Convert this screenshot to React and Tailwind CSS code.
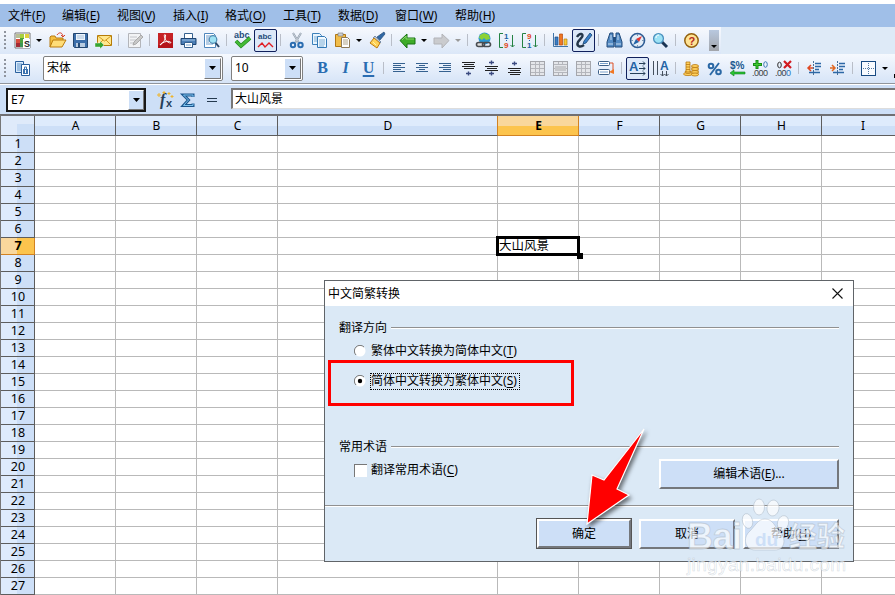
import clsx from 'clsx';

const COLUMNS = [
	{ name: 'A', width: 'w-[81px]' },
	{ name: 'B', width: 'w-[81px]' },
	{ name: 'C', width: 'w-[81px]' },
	{ name: 'D', width: 'w-[220px]' },
	{ name: 'E', width: 'w-[81px]' },
	{ name: 'F', width: 'w-[81px]' },
	{ name: 'G', width: 'w-[81px]' },
	{ name: 'H', width: 'w-[81px]' },
	{ name: 'I', width: 'w-[82px]' },
];
const ROWS = Array.from({ length: 27 }, (_, i) => i + 1);

const MENU = [
	['文件', 'F', 'w-[54px]'],
	['编辑', 'E', 'w-[55px]'],
	['视图', 'V', 'w-[56px]'],
	['插入', 'I', 'w-[52px]'],
	['格式', 'O', 'w-[58px]'],
	['工具', 'T', 'w-[55px]'],
	['数据', 'D', 'w-[57px]'],
	['窗口', 'W', 'w-[60px]'],
	['帮助', 'H', 'w-[60px]'],
];

function Label({ text, hotkey, after = '' }) {
	return (
		<span className="whitespace-nowrap">
			{text}(<span className="underline underline-offset-2 decoration-1">{hotkey}</span>){after}
		</span>
	);
}

/* toolbar pieces */

function Tool({ boxed, children }) {
	return (
		<div className={clsx('w-[23px] h-[23px] shrink-0 flex items-center justify-center', boxed && 'border border-[#10205c] rounded-[2px] bg-[#dce8f8]')}>
			<svg width="17" height="17" viewBox="0 0 17 17" fill="none" className="shrink-0 overflow-visible">{children}</svg>
		</div>
	);
}

function Sep() {
	return <div className="w-2 h-3 shrink-0 pl-[3px]"><div className="w-px h-3 bg-[#b9bec8]" /></div>;
}

function Caret({ muted }) {
	return (
		<svg width="11" height="5" viewBox="0 0 11 5" className="shrink-0">
			<path d="M2 1h6L5 4z" fill={muted ? '#999' : '#000'} />
		</svg>
	);
}

function Grip() {
	return (
		<div className="w-[11px] shrink-0 pl-1 flex flex-col gap-[2px]">
			{[1, 2, 3, 4, 5].map((n) => <div key={n} className="w-[2px] h-[2px] bg-[#8f949e]" />)}
		</div>
	);
}

function DropButton({ className }) {
	return (
		<div className={clsx('shrink-0 flex items-center justify-center bg-[#cddff7] border border-t-white border-l-white border-r-[#777] border-b-[#777]', className)}>
			<svg width="7" height="4" viewBox="0 0 7 4"><path d="M0 0h7L3.5 4z" fill="#000" /></svg>
		</div>
	);
}

function Combo({ value, className }) {
	return (
		<div className={clsx('h-[25px] shrink-0 flex items-center bg-white border border-[#808080] rounded-[2px] pl-[3px] pr-px', className)}>
			<span className="flex-1">{value}</span>
			<DropButton className="w-[17px] h-[21px]" />
		</div>
	);
}

function Lines({ rows, color = '#35618f' }) {
	return rows.map(([x, y, w]) => <path key={y} d={`M${x} ${y + 0.5}h${w}`} stroke={color} />);
}

function Digits({ x, y, fill, size = 8, children }) {
	return <text x={x} y={y} fill={fill} fontSize={size} fontWeight="bold" className="font-['Liberation_Sans',sans-serif]">{children}</text>;
}

function Decimals({ children }) {
	return <text x="0" y="16" fontSize="9" textLength="16" fill="#3a3f45" className="font-['Liberation_Sans',sans-serif]">{children}</text>;
}

function TableIcon({ variant }) {
	return (
		<Tool>
			<rect x="1.5" y="1.5" width="14" height="14" fill="#e4e6ea" stroke="#a4a6ac" />
			{variant !== 'merge' && <path d="M6.5 2v13M10.5 2v13" stroke="#b4b6bc" />}
			<path d="M2 4.5h13M2 8.5h13M2 12.5h13" stroke="#b4b6bc" />
			{variant === 'merge' && <><path d="M6.5 2v2M10.5 2v2M6.5 12v3M10.5 12v3" stroke="#b4b6bc" /><path d="M3 6h11v5H3z" fill="#c6c8cc" /></>}
		</Tool>
	);
}

function StandardBar() {
	return (
		<div className="h-[27px] flex bg-[#deeaf7]">
			<div className="w-[721px] pb-px flex items-center bg-gradient-to-b from-[#f7f9fd] to-[#dbe7f8]">
				<Grip />
				<Tool>
					<path d="M1 1h15v15H1z" fill="#fff" stroke="#777" />
					<path d="M2 2h4v4H2z" fill="#b8bf95" /><path d="M6 2h4v4H6z" fill="#a7cf3d" /><path d="M11 2h4v4h-4z" fill="#e0d13c" />
					<path d="M2 7h4v4H2z" fill="#d94c3d" /><path d="M6 6h4v5H6z" fill="#4ba440" /><path d="M2 11h4v4H2z" fill="#a22a35" /><path d="M6 11h3v4H6z" fill="#3d9555" />
					<path d="M9 7h7v9H9z" fill="#fff" />
					<Digits x="10" y="15" fill="#222" size="9">S</Digits>
				</Tool>
				<Caret /><div className="w-px" />
				<Tool>
					<path d="M1 15V5l1-1h4l1 2h7v3" fill="#f4bf3e" stroke="#b67a13" />
					<path d="M1 15l3-7h13l-4 7z" fill="#ffdd78" stroke="#bb7b0c" />
					<path d="M8 3c2-3 5-3 6 1M12 3l2 2 2-2" stroke="#d9412b" />
				</Tool>
				<Tool>
					<path d="M1.500 1.500h14v14h-13l-1-1z" fill="#3c6eaa" stroke="#24466f" />
					<path d="M4 2h9v6H4z" fill="#edf4fb" /><path d="M5 4h7M5 6h7" stroke="#a7bfd8" />
					<path d="M4 11h9v4H4z" fill="#b8cbe0" /><path d="M6 11h2v4H6z" fill="#254b77" />
				</Tool>
				<Tool>
					<path d="M2.500 3.500h14v10h-14z" fill="#ffe78e" stroke="#b57c09" />
					<path d="M3 4l6.500 5L16 4M3 13l5-5M16 13l-5-5" stroke="#d39b20" />
					<path d="M0 11h5V9l4 4-4 4v-2H0z" fill="#37a532" stroke="#fff" strokeWidth=".4" />
				</Tool>
				<Sep />
				<Tool>
					<path d="M2.500 1.500h12v14h-12z" fill="#f2f3f5" stroke="#b3b5ba" />
					<path d="M4 5h7M4 8h6M4 11h4" stroke="#c2c4c9" /><path d="M7 13l1-3 7-7 2 2-7 7z" fill="#c8c8c8" stroke="#aaa" />
				</Tool>
				<Sep />
				<Tool>
					<path d="M1 1h15v15H1z" fill="#b5141a" /><path d="M1 1h15v6L1 13z" fill="#d83030" opacity=".5" />
					<path d="M3 13c4-2 6-7 5.500-10-1-1-1.500 0-1 2 1 4 4 6 6 6 1-1-1-2-4-1.500-3 .5-6 2-6.500 3.500" stroke="#fff" strokeWidth="1" />
				</Tool>
				<Tool>
					<path d="M4.500 1.500h8v5h-8z" fill="#fff" stroke="#35618f" />
					<path d="M1 6.500h15v6H1z" fill="#4b7eb6" stroke="#1f4572" /><path d="M2 8h13" stroke="#9fc1e4" />
					<path d="M4.500 10.500h8v5h-8z" fill="#fff" stroke="#35618f" /><path d="M6 13h5" stroke="#7ba5d0" />
				</Tool>
				<Tool>
					<path d="M1.500 1.500h9l2 2v12h-11z" fill="#fff" stroke="#4f86bd" />
					<path d="M3 4h5M3 6h3M3 8h3M3 10h3M3 12h7" stroke="#6d9bcb" />
					<path d="M12 10l4 5" stroke="#2b4766" strokeWidth="2" /><circle cx="10" cy="7.500" r="3.800" fill="#9fe2f4" stroke="#4b86ae" strokeWidth="1.200" />
				</Tool>
				<Sep />
				<Tool>
					<Digits x="0" y="6" fill="#1f4d7b" size="9">abc</Digits>
					<path d="M2 9l5 5 9-8" stroke="#23881f" strokeWidth="3.800" /><path d="M2 9l5 5 9-8" stroke="#44bb36" strokeWidth="2.400" />
				</Tool>
				<Tool boxed>
					<Digits x="1" y="7" fill="#1f4d7b" size="8">abc</Digits>
					<path d="M1 15l4-4 3 4 4-4 4 4" stroke="#e01d24" strokeWidth="1.400" />
				</Tool>
				<Sep />
				<Tool>
					<path d="M5 1l6 10M13 1L7 11" stroke="#8d9aa8" strokeWidth="2" /><path d="M5 1l6 10M13 1L7 11" stroke="#dce3ea" strokeWidth=".7" />
					<circle cx="5" cy="13" r="2.200" stroke="#2b6db1" strokeWidth="2" /><circle cx="12.500" cy="13" r="2.200" stroke="#2b6db1" strokeWidth="2" />
				</Tool>
				<Tool>
					<path d="M1.500 1.500h7l2 2v9h-9z" fill="#e8f4fd" stroke="#3c80ba" /><path d="M3 5h5M3 7h5M3 9h4" stroke="#7eaed5" />
					<path d="M6.500 4.500h7l2 2v9h-9z" fill="#f1f9ff" stroke="#3278b5" /><path d="M8 8h6M8 10h6M8 12h6M8 14h5" stroke="#7eaed5" />
				</Tool>
				<Tool>
					<path d="M1.500 2.500h10v12h-10z" fill="#f1bd4a" stroke="#b17714" /><path d="M4 1h5v3H4z" fill="#ccd0d5" stroke="#777" strokeWidth=".6" />
					<path d="M7.500 5.500h6l2 2v8h-8z" fill="#fff" stroke="#8b795a" /><path d="M9 8h5M9 10h5M9 12h5" stroke="#afa388" />
				</Tool>
				<Caret />
				<Tool>
					<path d="M16 0l1 2-5 6-3-3z" fill="#3068a5" stroke="#234c79" strokeWidth=".7" />
					<path d="M7 4l6 6-2 2-6-6z" fill="#b5c7dc" stroke="#566c89" strokeWidth=".7" />
					<path d="M6 6l6 5-3 5-7-5z" fill="#ffd257" stroke="#bd7b10" /><path d="M5 10l3 3" stroke="#fff1a7" />
				</Tool>
				<Sep />
				<Tool><path d="M1 8.500L8 2v4h8v6H8v4z" fill="#3eac28" stroke="#187312" /><path d="M3 8l4-4v3h8" stroke="#89d46b" /></Tool>
				<Caret />
				<Tool><path d="M16 8.500L9 2v4H1v6h8v4z" fill="#cacbce" stroke="#b2b3b7" /></Tool>
				<Caret muted />
				<Sep />
				<Tool>
					<circle cx="9.500" cy="6.500" r="6" fill="#2c97d4" /><path d="M5 3l4-2 5 2 1 4-4 1-2-2-2 2-3-2z" fill="#8cd236" />
					<rect x="1.500" y="10.500" width="8" height="4" rx="2" fill="#ddd" stroke="#494d52" strokeWidth="1.600" /><rect x="7.500" y="10.500" width="8" height="4" rx="2" stroke="#494d52" strokeWidth="1.600" />
				</Tool>
				<Tool>
					<path d="M5 1.500H1.500v14H5" stroke="#248242" /><Digits x="6" y="7" fill="#2160a5">1</Digits><Digits x="6" y="16" fill="#e24822">9</Digits>
					<path d="M8.500 8v2" stroke="#2160a5" strokeDasharray="1" /><path d="M14.500 3v12m-2-2l2 2 2-2" stroke="#248242" />
				</Tool>
				<Tool>
					<path d="M5 1.500H1.500v14H5" stroke="#248242" /><Digits x="6" y="7" fill="#e24822">9</Digits><Digits x="6" y="16" fill="#2160a5">1</Digits>
					<path d="M8.500 8v2" stroke="#2160a5" strokeDasharray="1" /><path d="M14.500 3v12m-2-2l2 2 2-2" stroke="#248242" />
				</Tool>
				<Sep />
				<Tool>
					<path d="M1.500 1v13.500H16" stroke="#4175a8" /><path d="M3 5h3v8H3z" fill="#3d80c7" stroke="#214c80" strokeWidth=".7" />
					<path d="M7.500 2h3v11h-3z" fill="#ef7622" stroke="#b84a0c" strokeWidth=".7" /><path d="M12 7h3v6h-3z" fill="#f8cb35" stroke="#b98218" strokeWidth=".7" />
				</Tool>
				<Tool boxed>
					<path d="M2 5c3-5 7-3 5 0L3 10c-2 4 2 6 6 3" stroke="#253749" strokeWidth="2.400" />
					<path d="M9 9l6-8 2 2-6 8-3 1z" fill="#377fc8" stroke="#174473" strokeWidth=".8" />
				</Tool>
				<Sep />
				<Tool>
					<path d="M4 1h3v4l1 2v8H1v-5zM10 1h3l3 9v5H9V7l1-2z" fill="#548bc4" stroke="#244d7c" /><path d="M7 5h3v5H7z" fill="#244d7c" />
					<path d="M2 12h5M10 12h5M5 3v5M12 3v5" stroke="#c8ddf1" />
				</Tool>
				<Tool>
					<circle cx="8.500" cy="8.500" r="7" fill="#e3edf7" stroke="#2d5c94" strokeWidth="1.600" /><path d="M8.500 2v2M8.500 13v2M2 8.500h2M13 8.500h2" stroke="#7895b5" />
					<path d="M13 4l-3 6-3-3z" fill="#e43632" /><path d="M4 13l3-6 3 3z" fill="#2464a7" />
				</Tool>
				<Tool><path d="M10 10l5 5" stroke="#1b3554" strokeWidth="3" /><circle cx="6.500" cy="6.500" r="4.900" fill="#9de2f5" stroke="#4a90bd" strokeWidth="1.300" /><path d="M4 6c0-2 1-3 3-3" stroke="#fff" /></Tool>
				<Sep />
				<Tool><circle cx="8.500" cy="8.500" r="6.700" fill="#ffe395" stroke="#94610f" strokeWidth="1.500" /><Digits x="5.500" y="12.500" fill="#b52a22" size="11">?</Digits></Tool>
				<div className="ml-[6px] w-[10px] h-[21px] shrink-0 bg-gradient-to-b from-[#b8c8df] to-[#a2a5aa] flex items-end pb-[2px]"><Caret /></div>
			</div>
		</div>
	);
}

const VALIGN = {
	top: { lines: [2, 4, 6, 8], marks: [13] },
	middle: { lines: [6, 8, 10], marks: [2, 13] },
	bottom: { lines: [8, 10, 12, 14], marks: [3] },
};

function AlignV({ pos }) {
	const { lines, marks } = VALIGN[pos];
	return (
		<Tool>
			<Lines color="#222" rows={lines.map((y, i) => [i % 2 ? 4 : 2, y, i % 2 ? 10 : 13])} />
			{marks.map((y) => <path key={y} d={`M8.500 ${y - 1.5}v4M6 ${y + 0.5}h5`} stroke="#3b4a80" strokeWidth="1.400" />)}
		</Tool>
	);
}

function FormatBar() {
	return (
		<div className="h-[30px] pb-[1px] flex items-center bg-gradient-to-b from-[#f6f9fe] to-[#d6e4f7] border-b border-[#90959c]">
			<Grip />
			<Tool>
				<path d="M1.500 1.500h8v11h-8z" fill="#d9ebfb" stroke="#2b609d" /><path d="M3 4h5M3 6h4M3 8h4M3 10h4" stroke="#5e92c7" />
				<path d="M7.500 4.500h8v11h-8z" fill="#fff" stroke="#2b609d" /><path d="M9 14V9h5v5z" fill="#3d74b0" /><path d="M10.500 9V7h2v2" stroke="#3d74b0" /><path d="M11.500 10v3" stroke="#fff" />
			</Tool>
			<Combo value="宋体" className="w-[180px] ml-[9px]" />
			<Combo value="10" className="w-[72px] ml-2" />
			<div className="w-2 shrink-0" />
			{['B', 'I', 'U'].map((c) => (
				<div key={c} className={clsx("w-[23px] shrink-0 text-center text-[16px] leading-[20px] font-bold font-['Liberation_Serif',serif] text-[#2a6db2]", c === 'I' && 'italic', c === 'U' && 'underline underline-offset-2 decoration-2')}>{c}</div>
			))}
			<Sep />
			<Tool><Lines rows={[[2, 3, 12], [2, 5, 8], [2, 7, 12], [2, 9, 8], [2, 11, 12]]} /></Tool>
			<Tool><Lines rows={[[2, 3, 12], [5, 5, 6], [2, 7, 12], [5, 9, 6], [2, 11, 12]]} /></Tool>
			<Tool><Lines rows={[[2, 3, 12], [6, 5, 8], [2, 7, 12], [6, 9, 8], [2, 11, 12]]} /></Tool>
			<AlignV pos="top" />
			<AlignV pos="middle" />
			<AlignV pos="bottom" />
			<TableIcon />
			<TableIcon variant="merge" />
			<TableIcon />
			<Tool>
				<rect x=".5" y="1.500" width="11" height="4" rx="1" fill="#fff" stroke="#3c5f87" /><rect x=".5" y="9.500" width="11" height="5" rx="1" fill="#fff" stroke="#3c5f87" />
				<path d="M2 3.500h8M2 12h8" stroke="#78a0cc" /><path d="M12 3h3v9" stroke="#dc5126" /><path d="M11 12l5-3v5z" fill="#f07723" />
			</Tool>
			<Sep />
			<Tool boxed><Digits x="0" y="11" fill="#2363a5" size="13">A</Digits><path d="M10 3.500h6m-2-2l2 2-2 2M10 8.500h6m-2-2l2 2-2 2M1 13.500h15m-2-2l2 2-2 2" stroke="#263f58" /></Tool>
			<Tool><path d="M1.500 1v14M5.500 1v14M10.500 11v5M14.500 11v5m-6-2l2 2 2-2 2 2 2-2" stroke="#45505d" /><Digits x="8" y="10" fill="#2363a5" size="12">A</Digits></Tool>
			<Sep />
			<Tool>
				<g fill="#ffd05d" stroke="#b87812" strokeWidth=".8">
					<ellipse cx="5" cy="14" rx="4.500" ry="1.600" /><ellipse cx="5" cy="12" rx="3" ry="1.500" /><path d="M3 2h4v10H3zM3 4.500h4M3 7h4M3 9.500h4" />
					<path d="M9 6h6v9H9z" /><ellipse cx="12" cy="6" rx="3.500" ry="1.500" /><ellipse cx="12" cy="9" rx="3.500" ry="1.500" /><ellipse cx="12" cy="12" rx="3.500" ry="1.500" /><ellipse cx="12" cy="14.500" rx="3.500" ry="1.500" />
				</g>
			</Tool>
			<Tool><circle cx="5" cy="6" r="2.300" stroke="#2a68a5" strokeWidth="2" /><circle cx="12.500" cy="12" r="2.300" stroke="#2a68a5" strokeWidth="2" /><path d="M13 3L4 15" stroke="#2a68a5" strokeWidth="1.800" /></Tool>
			<Tool><Digits x="1" y="9" fill="#205990" size="10">$%</Digits><path d="M1 13l4-3v2h11v2H5v2z" fill="#2ac432" stroke="#128222" strokeWidth=".6" /></Tool>
			<Tool>
				<Decimals>.000</Decimals>
				<path d="M5 0v9M1 4.500h9" stroke="#179017" strokeWidth="3" /><path d="M5 1v7M2 4.500h7" stroke="#42cb30" />
				<ellipse cx="13.500" cy="4.500" rx="1.800" ry="2.800" stroke="#3a78b5" />
			</Tool>
			<Tool>
				<Decimals>.00<tspan fill="#2672b9">0</tspan></Decimals>
				<ellipse cx="4.500" cy="5" rx="1.800" ry="2.800" stroke="#333" /><path d="M9 1l7 7M16 1L9 8" stroke="#d21a20" strokeWidth="2.200" />
			</Tool>
			<Sep />
			<Tool><path d="M7.500 1v14" stroke="#497097" strokeDasharray="2 1" /><path d="M9 3.500h6M9 6.500h6M9 9.500h4M3 12.500h11" stroke="#2d68a6" strokeWidth="1.500" /><path d="M7 8H2m3-3L2 8l3 3" stroke="#df4923" strokeWidth="1.500" /></Tool>
			<Tool><path d="M8.500 1v14" stroke="#497097" strokeDasharray="2 1" /><path d="M10 3.500h6M10 6.500h6M10 9.500h4M4 12.500h11" stroke="#2d68a6" strokeWidth="1.500" /><path d="M1 8h5M3 5l3 3-3 3" stroke="#e16924" strokeWidth="1.500" /></Tool>
			<Sep />
			<Tool><rect x="1.500" y="1.500" width="14" height="14" fill="#f8fbff" stroke="#174a82" /><path d="M8.500 3v11M3 8.500h11" stroke="#5279a4" strokeDasharray="1 1" /></Tool>
			<Caret />
			<div className="ml-[3px] mt-[15px] w-1 h-1 shrink-0 bg-black" />
		</div>
	);
}

function FormulaBar() {
	return (
		<div className="h-[30px] pt-[3px] pl-[6px] flex items-start bg-[#cddff7] border-t border-white">
			<div className="w-[140px] h-6 shrink-0 flex items-center bg-white border-2 border-[#181818] pl-[3px]">
				<span className="flex-1">E7</span>
				<DropButton className="w-[16px] h-5" />
			</div>
			<div className="w-[85px] h-6 shrink-0 flex items-center pl-[8px]">
				<Tool>
					<text x="3" y="13" fontSize="16" fontStyle="italic" fontWeight="bold" fill="#253e5a" className="font-['Liberation_Serif',serif]">f</text>
					<Digits x="9" y="15" fill="#253e5a" size="11">x</Digits>
					<path d="M2 1v4M0 3h4M7-1v3M5.500 .5h3M12 0v3M10.500 1.500h3M15 3v3M13.500 4.500h3" stroke="#efb42b" />
				</Tool>
				<Tool><path d="M13 5V3H3.500l5 5-5 5.500H13v-2" stroke="#1d578e" strokeWidth="3" /><path d="M13 5V3H3.500l5 5-5 5.500H13v-2" stroke="#7cc3ef" /></Tool>
				<Tool><path d="M4 6.500h10M4 9.500h10" stroke="#24394e" strokeWidth="1.200" /></Tool>
			</div>
			<div className="flex-1 h-[21px] flex items-center bg-white border-t-2 border-l-2 border-[#777] border-b border-b-[#ddd] pl-[2px]">大山风景</div>
		</div>
	);
}

function Sheet() {
	return (
		<div className="bg-white border-l-2 border-[#777] border-t-2 border-t-[#6f6f73]">
			<div className="flex h-5 -mx-px">
				<div className="w-[34px] shrink-0 border-r border-b border-[#5d5d5d] bg-[#dfeafa] pl-4 pt-2"><div className="h-full bg-[#cddff7]" /></div>
				{COLUMNS.map((c) => (
					<div
						key={c.name}
						className={clsx(
							'shrink-0 flex items-center justify-center border-r border-b pl-px',
							c.width,
							c.name === 'E'
								? 'font-bold border-[#d28221] bg-[linear-gradient(#f9d79c_50%,#fcc44d_50%)]'
								: 'border-[#5d5d5d] bg-[linear-gradient(#deebfc_50%,#cddff7_50%)]',
							c.name === 'D' && 'border-r-[#d28221]',
						)}
					>
						{c.name}
					</div>
				))}
			</div>
			{ROWS.map((n) => (
				<div key={n} className="flex h-[17px] -mx-px">
					<div
						className={clsx(
							'w-[34px] shrink-0 flex items-center justify-center border-r border-b pl-px text-[12.5px]',
							n === 7
								? 'font-bold border-[#d28221] bg-[linear-gradient(90deg,#f9d79c_50%,#fcc44d_50%)]'
								: 'border-[#5d5d5d] bg-[linear-gradient(90deg,#deebfc_50%,#cddff7_50%)]',
						)}
					>
						{n}
					</div>
					{COLUMNS.map((c) => (
						<div key={c.name} className={clsx('relative shrink-0 border-r border-b border-[#b9b9b9]', c.width)}>
							{n === 7 && c.name === 'E' && (
								<div className="absolute -left-[2px] -top-[2px] w-[84px] h-[20px] border-3 border-black bg-white flex items-center text-[12.5px] z-10">
									大山风景
									<div className="absolute -right-[6px] -bottom-[6px] w-[6px] h-[6px] bg-black" />
								</div>
							)}
						</div>
					))}
				</div>
			))}
		</div>
	);
}

/* dialog */

function GroupTitle({ children }) {
	return (
		<div className="h-4 flex items-center gap-[4px]">
			<span>{children}</span>
			<div className="flex-1 h-[2px] bg-white border-t border-[#909090]" />
		</div>
	);
}

function Radio({ checked }) {
	return (
		<svg width="12" height="12" viewBox="0 0 12 12" className="shrink-0">
			<circle cx="6" cy="6" r="5.500" fill="#fff" />
			<path d="M2 10A5.500 5.500 0 0 1 10 2" fill="none" stroke="#777" />
			{checked && <circle cx="6" cy="6" r="2.200" fill="#000" />}
		</svg>
	);
}

function Button({ primary, className, children }) {
	return (
		<div className={clsx('shrink-0', className, primary && 'border border-[#555]')}>
			<div className="h-full flex items-center justify-center bg-[#cddff7] border-2 border-t-white border-l-white border-r-[#74777c] border-b-[#74777c]">{children}</div>
		</div>
	);
}

function Dialog() {
	return (
		<div className="absolute left-[324px] top-[280px] w-[530px] h-[282px] border border-[#606468] bg-[#dbe9f6] z-20">
			<div className="h-[25px] flex items-center justify-between bg-white pl-[3px] pr-[10px]">
				<span>中文简繁转换</span>
				<svg width="11" height="11" viewBox="0 0 11 11"><path d="M.5.5l10 10M10.500.5l-10 10" stroke="#111" strokeWidth="1.100" /></svg>
			</div>
			<div className="px-[14px] pt-[14px]">
				<GroupTitle>翻译方向</GroupTitle>
				<div className="h-4 mt-[7px] pl-[15px] flex items-center gap-[5px]">
					<Radio />
					<Label text="繁体中文转换为简体中文" hotkey="T" />
				</div>
				<div className="h-4 mt-[14px] pl-[15px] flex items-center gap-1">
					<Radio checked />
					<div className="h-[17px] w-[150px] border border-dotted border-black flex items-center"><Label text="简体中文转换为繁体中文" hotkey="S" /></div>
				</div>
				<div className="mt-[50px]"><GroupTitle>常用术语</GroupTitle></div>
				<div className="mt-[4px] pl-[15px] flex justify-between">
					<div className="h-4 mt-[3px] flex items-center gap-1">
						<div className="w-[13px] h-[13px] bg-white border-t border-l border-[#777]" />
						<Label text="翻译常用术语" hotkey="C" />
					</div>
					<Button className="w-[180px] h-[30px]"><Label text="编辑术语" hotkey="E" after="..." /></Button>
				</div>
			</div>
			<div className="mt-4 h-[2px] bg-white border-t border-[#909090]" />
			<div className="mt-[11px] pr-[14px] flex justify-end items-end">
				<Button primary className="w-[96px] h-[31px]">确定</Button>
				<Button className="w-[96px] h-[30px] ml-[7px]">取消</Button>
				<Button className="w-[96px] h-[30px] ml-2"><Label text="帮助" hotkey="H" /></Button>
			</div>
		</div>
	);
}

function Watermark() {
	return (
		<svg width="170" height="84" viewBox="0 0 170 84" className="absolute left-[682px] top-[496px] z-30">
			<g fill="#fff" fillOpacity=".68" stroke="#a9b6c4" strokeOpacity=".55" strokeWidth=".9" className="font-['Liberation_Sans','Noto_Sans_CJK_SC',sans-serif]">
				<text x="5" y="53" fontSize="36" fontWeight="bold" textLength="55">Bai</text>
				<ellipse cx="65.500" cy="25" rx="5" ry="7.500" transform="rotate(-15 65.500 25)" />
				<ellipse cx="77" cy="11" rx="5.500" ry="8" />
				<ellipse cx="91" cy="12" rx="6" ry="8" transform="rotate(8 91 12)" />
				<ellipse cx="101" cy="27" rx="5.500" ry="7.500" transform="rotate(15 101 27)" />
				<path d="M83 23c8 0 10 8 14 12 8 7 6 19-4 19H73c-10 0-13-12-5-19 5-5 8-12 15-12z" />
				<text x="107" y="51" fontSize="28" fontWeight="bold" textLength="56">经验</text>
				<text x="5" y="75" fontSize="19" textLength="159" strokeWidth=".5">jingyan.baidu.com</text>
			</g>
			<text x="73" y="50" fontSize="19" fontWeight="bold" fill="#cddff7" className="font-['Liberation_Sans',sans-serif]">du</text>
		</svg>
	);
}

export default function App() {
	return (
		<div className="relative w-[895px] h-[595px] overflow-hidden bg-white text-black text-[12px] leading-none font-['Noto_Sans','Noto_Sans_CJK_SC',sans-serif]">
			<div className="mt-1 h-[23px] pl-2 flex items-center bg-[#a0bfe8]">
				{MENU.map(([text, key, width]) => <div key={key} className={clsx('shrink-0', width)}><Label text={text} hotkey={key} /></div>)}
			</div>
			<StandardBar />
			<FormatBar />
			<FormulaBar />
			<Sheet />
			<Dialog />

			{/* step highlight and pointer */}
			<div className="absolute left-[328px] top-[360px] w-[246px] h-[46px] border-3 border-[#f00] z-30" />
			<svg width="70" height="110" viewBox="0 0 70 110" className="absolute left-[580px] top-[422px] z-30 drop-shadow-[2px_3px_2px_#0008]">
				<path d="M7 102l5-49 12 5L64 7 37 67l12 6z" fill="#f00" stroke="#fff" strokeWidth="1.200" />
			</svg>
			<Watermark />
		</div>
	);
}
